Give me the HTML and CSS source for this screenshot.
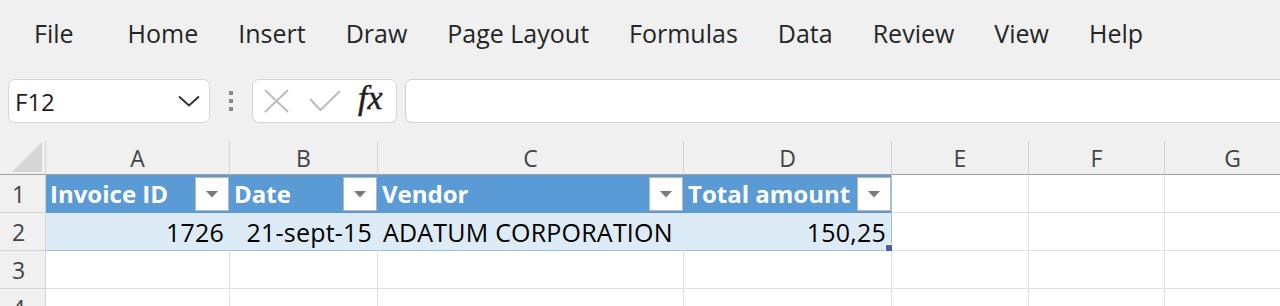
FILE: index.html
```html
<!DOCTYPE html>
<html lang="en">
<head>
<meta charset="utf-8">
<title>Excel</title>
<link rel="stylesheet" href="styles.css">
</head>
<body>
<nav class="ribbon">
  <span class="tab tab-file">File</span>
  <span class="tab">Home</span>
  <span class="tab">Insert</span>
  <span class="tab">Draw</span>
  <span class="tab">Page Layout</span>
  <span class="tab">Formulas</span>
  <span class="tab">Data</span>
  <span class="tab">Review</span>
  <span class="tab">View</span>
  <span class="tab">Help</span>
</nav>
<div class="fbar">
  <div class="namebox">
    <span class="ref">F12</span>
    <svg class="chev" width="22" height="12" viewBox="0 0 22 12"><path d="M1 1.5 L11 10.5 L21 1.5" fill="none" stroke="#333" stroke-width="2"/></svg>
  </div>
  <div class="dots"><i></i><i></i><i></i></div>
  <div class="fxbox">
    <svg class="icon-x" width="25" height="24" viewBox="0 0 25 24"><path d="M1 1 L24 23 M24 1 L1 23" stroke="#bdbdbd" stroke-width="2" fill="none"/></svg>
    <svg class="icon-check" width="32" height="22" viewBox="0 0 32 22"><path d="M1 9 L11.5 20 L31 1" stroke="#bdbdbd" stroke-width="2" fill="none"/></svg>
    <span class="fx">fx</span>
  </div>
  <div class="finput"></div>
</div>
<div class="sheet">
  <div class="corner"><span class="tri"></span></div>
  <div class="colhdr">A</div>
  <div class="colhdr">B</div>
  <div class="colhdr">C</div>
  <div class="colhdr">D</div>
  <div class="colhdr">E</div>
  <div class="colhdr">F</div>
  <div class="colhdr">G</div>

  <div class="rowhdr">1</div>
  <div class="cell th">Invoice ID<span class="dd"><b></b></span></div>
  <div class="cell th">Date<span class="dd"><b></b></span></div>
  <div class="cell th">Vendor<span class="dd"><b></b></span></div>
  <div class="cell th th-last">Total amount<span class="dd"><b></b></span></div>
  <div class="cell"></div>
  <div class="cell"></div>
  <div class="cell"></div>

  <div class="rowhdr">2</div>
  <div class="cell td num">1726</div>
  <div class="cell td num">21-sept-15</div>
  <div class="cell td">ADATUM CORPORATION</div>
  <div class="cell td num td-last">150,25<span class="handle"></span></div>
  <div class="cell"></div>
  <div class="cell"></div>
  <div class="cell"></div>

  <div class="rowhdr">3</div>
  <div class="cell"></div>
  <div class="cell"></div>
  <div class="cell"></div>
  <div class="cell"></div>
  <div class="cell"></div>
  <div class="cell"></div>
  <div class="cell"></div>

  <div class="rowhdr">4</div>
  <div class="cell"></div>
  <div class="cell"></div>
  <div class="cell"></div>
  <div class="cell"></div>
  <div class="cell"></div>
  <div class="cell"></div>
  <div class="cell"></div>
</div>
</body>
</html>
```
FILE: styles.css
```css
* { box-sizing: border-box; }
html, body { margin: 0; padding: 0; }
body {
  width: 1280px;
  height: 306px;
  overflow: hidden;
  background: #f0f0f0;
  font-family: "Open Sans", "Noto Sans", sans-serif;
  color: #262626;
}

.ribbon {
  display: flex;
  gap: 40px;
  height: 79px;
  padding: 16px 0 0 34px;
  font-size: 25px;
  line-height: normal;
  color: #262626;
}
.tab { white-space: nowrap; }
.tab-file { margin-right: 14px; }

.fbar {
  display: flex;
  align-items: stretch;
  height: 44px;
  padding-left: 8px;
}
.fbar > * { flex-shrink: 0; }
.namebox {
  width: 202px;
  display: flex;
  align-items: center;
  justify-content: space-between;
  padding: 0 9px 0 6px;
  background: #fff;
  border: 1px solid #d6d6d6;
  border-radius: 7px;
}
.ref { font-size: 24px; color: #1f1f1f; }
.chev { display: block; }
.dots {
  width: 4px;
  margin: 0 19px 0 19px;
  display: flex;
  flex-direction: column;
  justify-content: center;
  gap: 4px;
}
.dots i { display: block; width: 4px; height: 4px; background: #8a8a8a; }
.fxbox {
  width: 145px;
  display: flex;
  align-items: center;
  padding-left: 11px;
  background: #fff;
  border: 1px solid #d6d6d6;
  border-radius: 7px;
}
.icon-x { display: block; }
.icon-check { display: block; margin-left: 20px; }
.fx {
  margin-left: 17px;
  font-family: "Liberation Serif", "DejaVu Serif", serif;
  font-style: italic;
  font-size: 34px;
  line-height: 1;
  color: #1f1f1f;
  margin-top: -6px;
  -webkit-text-stroke: 0.5px #1f1f1f;
}
.finput {
  width: 900px;
  margin-left: 8px;
  background: #fff;
  border: 1px solid #d0d0d0;
  border-radius: 7px;
}

.sheet {
  margin-top: 18px;
  display: grid;
  grid-template-columns: 46px 184px 148px 306px 208px 137px 136px 136px;
  grid-template-rows: 34px 38px 38px 38px 38px;
  background: #fff;
}
.corner {
  background: #f0f0f0;
  border-right: 1px solid #d4d4d4;
  border-bottom: 1px solid #a0a0a0;
  padding: 0 0 2px 12px;
  display: flex;
  align-items: flex-end;
}
.tri {
  display: block;
  width: 30px;
  height: 30px;
  background: #d6d6d6;
  clip-path: polygon(100% 0, 100% 100%, 0 100%);
}
.colhdr {
  background: #f0f0f0;
  border-right: 1px solid #d4d4d4;
  border-bottom: 1px solid #a0a0a0;
  display: flex;
  align-items: center;
  justify-content: center;
  font-size: 23px;
  color: #444;
}
.rowhdr {
  background: #f0f0f0;
  border-right: 1px solid #d4d4d4;
  border-bottom: 1px solid #d4d4d4;
  display: flex;
  align-items: center;
  padding-left: 12px;
  font-size: 23px;
  color: #444;
}
.cell {
  border-right: 1px solid #e1e1e1;
  border-bottom: 1px solid #e1e1e1;
  font-family: "Open Sans", "Noto Sans", sans-serif;
  font-size: 24px;
  display: flex;
  align-items: center;
  white-space: nowrap;
  position: relative;
}
.th {
  background: #5b9bd5;
  border-right-color: #5b9bd5;
  border-bottom-color: #5b9bd5;
  color: #fff;
  font-weight: bold;
  padding-left: 4px;
  align-items: stretch;
  line-height: 37px;
}
.th-last { border-right-color: #9bc2e6; }
.dd {
  margin: 2px 0 1px auto;
  width: 34px;
  background: #fff;
  border: 1px solid #b9b9b9;
  display: flex;
  align-items: center;
  justify-content: center;
}
.dd b {
  display: block;
  width: 13px;
  height: 7px;
  background: #7a7a7a;
  clip-path: polygon(0 0, 100% 0, 50% 100%);
}
.td {
  background: #ddebf7;
  border-right-color: #ddebf7;
  border-bottom-color: #9bc2e6;
  color: #000;
  font-size: 25px;
  letter-spacing: 0.2px;
  padding: 0 5px 0 5px;
}
.td-last { border-right-color: #9bc2e6; }
.num { justify-content: flex-end; }
.handle {
  position: absolute;
  right: -1px;
  bottom: -1px;
  width: 7px;
  height: 7px;
  background: #4a5ab8;
  border-left: 1px solid #fff;
  border-top: 1px solid #fff;
}
```
